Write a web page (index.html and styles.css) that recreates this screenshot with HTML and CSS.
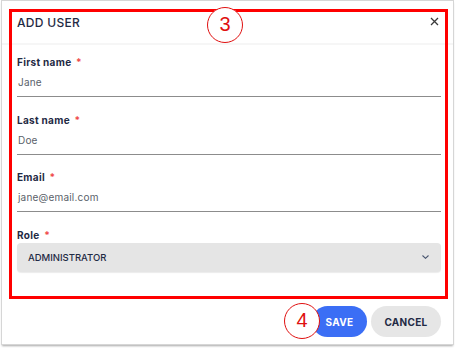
FILE: index.html
```html
<!DOCTYPE html>
<html lang="en">
<head>
<meta charset="utf-8">
<title>Add user</title>
<link rel="stylesheet" href="styles.css">
</head>
<body>
<div class="dialog">
  <div class="header">
    <h2 class="title">ADD USER</h2>
    <button class="close" aria-label="Close">
      <svg width="9" height="9" viewBox="0 0 9 9"><path d="M1 1L8 8M8 1L1 8" stroke="#3a3a3a" stroke-width="1.3" fill="none"/></svg>
    </button>
  </div>
  <div class="body">
    <div class="field">
      <div class="label">First name <span class="req">*</span></div>
      <div class="value">Jane</div>
    </div>
    <div class="field">
      <div class="label">Last name <span class="req">*</span></div>
      <div class="value">Doe</div>
    </div>
    <div class="field">
      <div class="label">Email <span class="req">*</span></div>
      <div class="value">jane@email.com</div>
    </div>
    <div class="field">
      <div class="label label-role">Role <span class="req">*</span></div>
      <div class="select">
        <span>ADMINISTRATOR</span>
        <svg width="7" height="4" viewBox="0 0 7 4"><path d="M0.5 0.5L3.5 3.3L6.5 0.5" stroke="#4a5670" stroke-width="1.1" fill="none"/></svg>
      </div>
    </div>
  </div>
  <div class="footer">
    <button class="btn btn-save">SAVE</button>
    <button class="btn btn-cancel">CANCEL</button>
  </div>
</div>
<div class="annot-box"></div>
<div class="annot-circle c3">3</div>
<div class="annot-circle c4">4</div>
</body>
</html>
```
FILE: styles.css
```css
html, body {
  margin: 0;
  padding: 0;
  background: #ffffff;
}
body {
  font-family: "Inter", "Noto Sans", sans-serif;
  color: #1f2a44;
  width: 456px;
  height: 351px;
  position: relative;
  overflow: hidden;
}
.dialog {
  margin: 1px 0 0 2px;
  width: 451px;
  height: 343px;
  background: #fff;
  box-shadow: 0 0 0 1px #d6d6d6, 0 2px 2px rgba(0,0,0,0.35);
  display: flex;
  flex-direction: column;
  box-sizing: border-box;
}
.header {
  height: 41px;
  display: flex;
  align-items: center;
  justify-content: space-between;
  padding: 1px 12px 0 15px;
  border-bottom: 2px solid #f6f6f6;
  flex-shrink: 0;
}
.title {
  margin: 0;
  font-size: 12px;
  font-weight: 500;
  letter-spacing: 0.3px;
  color: #1f2a44;
}
.close {
  border: 0;
  background: none;
  padding: 0;
  margin: -3px 2px 0 0;
  width: 9px;
  height: 9px;
  display: flex;
}
.body {
  padding: 10px 12px 0 15px;
  display: flex;
  flex-direction: column;
  gap: 15.5px;
}
.label {
  font-size: 10px;
  font-weight: 700;
  line-height: 14px;
  margin-bottom: 2px;
  letter-spacing: 0.3px;
  color: #1f2a44;
}
.label-role {
  margin-bottom: 1px;
}
.req {
  color: #ef4a4a;
  margin-left: 2px;
}
.value {
  font-size: 10px;
  line-height: 14px;
  padding: 4px 0 7px 1px;
  color: #5a5f6a;
  letter-spacing: 0.2px;
  border-bottom: 1px solid #8c8c8c;
}
.select {
  height: 29px;
  background: #e5e5e5;
  border-radius: 4px;
  box-shadow: 0 1px 1px rgba(0,0,0,0.08);
  display: flex;
  align-items: center;
  justify-content: space-between;
  padding: 0 12px 0 11px;
  font-size: 9.5px;
  font-weight: 500;
  color: #1f2a44;
}
.footer {
  margin-top: auto;
  display: flex;
  justify-content: flex-end;
  gap: 4px;
  padding: 0 12px 7px 0;
}
.btn {
  height: 31px;
  border: 0;
  border-radius: 16px;
  font-family: inherit;
  font-size: 10px;
  font-weight: 700;
  letter-spacing: 0.3px;
}
.btn-save {
  width: 55px;
  background: #3b6ef5;
  color: #fff;
}
.btn-cancel {
  width: 70px;
  background: #e6e6e6;
  color: #1f2a44;
}
.annot-box {
  position: absolute;
  left: 9px;
  top: 9px;
  width: 439px;
  height: 290px;
  border: 3px solid #ff0000;
  box-sizing: border-box;
}
.annot-circle {
  position: absolute;
  width: 36px;
  height: 36px;
  box-sizing: border-box;
  border: 1.5px solid #e01010;
  border-radius: 50%;
  background: #fff;
  color: #e01010;
  font-family: "Liberation Sans", Arial, sans-serif;
  font-size: 20px;
  display: flex;
  align-items: center;
  justify-content: center;
}
.c3 {
  left: 207px;
  top: 6.5px;
}
.c4 {
  left: 284px;
  top: 302.5px;
}
```
